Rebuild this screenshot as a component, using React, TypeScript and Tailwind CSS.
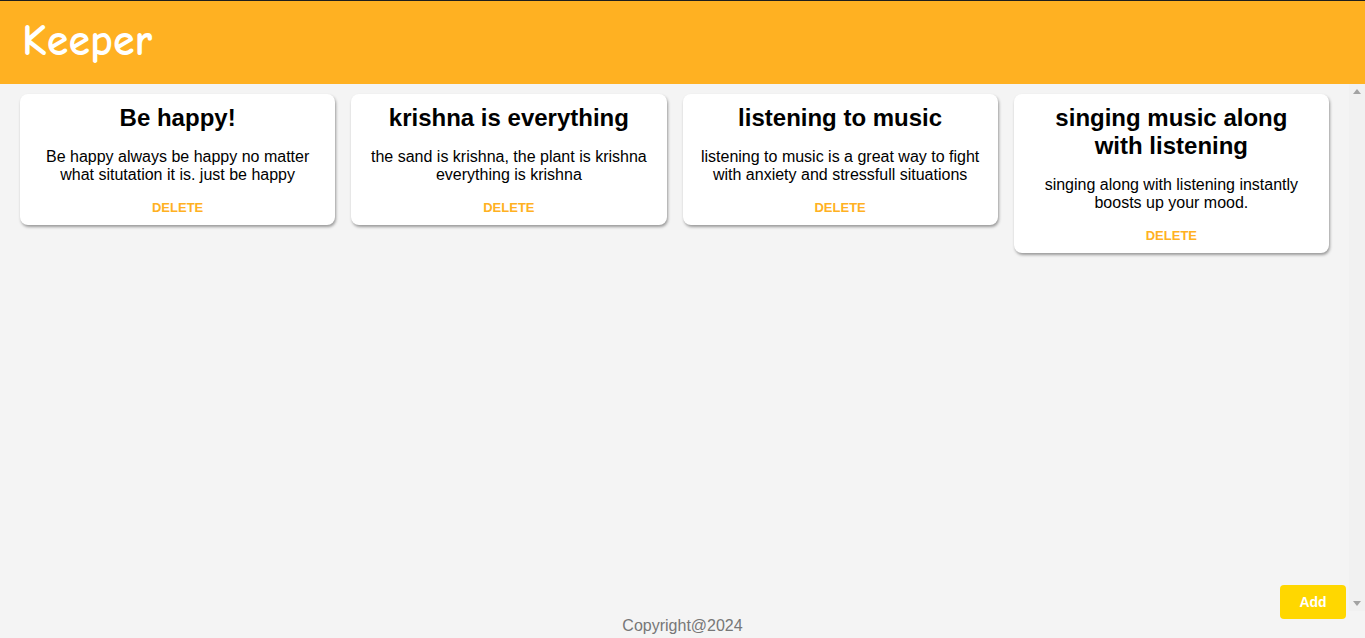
import React from 'react';

const notes = [
    {
        title: 'Be happy!',
        content: 'Be happy always be happy no matter what situtation it is. just be happy'
    },
    {
        title: 'krishna is everything',
        content: 'the sand is krishna, the plant is krishna everything is krishna'
    },
    {
        title: 'listening to music',
        content: 'listening to music is a great way to fight with anxiety and stressfull situations'
    },
    {
        title: 'singing music along with listening',
        content: 'singing along with listening instantly boosts up your mood.'
    }
];

const Note = ({ title, content }: { title: string; content: string }) => {
    return (
        <div className="bg-white rounded-[8px] shadow-[1px_2px_3px_#9a9a9a] px-4 pt-[10px] pb-[9px] text-center">
            <h1 className="text-[24px] leading-[28px] font-bold text-black m-0">{title}</h1>
            <p className="text-[16px] leading-[18px] text-black mt-4">{content}</p>
            <button className="block mx-auto mt-[16px] text-[13px] leading-[16px] font-bold text-[#ffb122] uppercase bg-transparent border-none">
                Delete
            </button>
        </div>
    );
};

export default function App() {
    return (
        <div className="h-screen flex flex-col bg-[#f4f4f4] font-['Liberation_Sans',Arial,sans-serif]">
            <header className="h-[84px] shrink-0 bg-[#ffb122] border-t border-[#1e1e1e] px-[22px] flex items-center">
                <h1 className="text-white text-[44px] leading-none font-bold font-['Comic_Sans_MS','Comic_Neue',cursive] pb-[4px]">
                    Keeper
                </h1>
            </header>
            <main className="flex-1 flex min-h-0">
                <div className="flex-1 overflow-y-auto">
                    <div className="grid grid-cols-4 gap-4 px-5 pt-[10px] items-start">
                        {notes.map((note, i) => (
                            <Note key={i} title={note.title} content={note.content} />
                        ))}
                    </div>
                </div>
                {/* scrollbar track */}
                <div className="w-4 shrink-0 bg-[#f1f1f1] flex flex-col justify-between items-center py-[5px]">
                    <svg width="8" height="5" viewBox="0 0 8 5">
                        <path d="M4 0 L8 5 L0 5 Z" fill="#a3a3a3" />
                    </svg>
                    <svg width="8" height="5" viewBox="0 0 8 5">
                        <path d="M0 0 L8 0 L4 5 Z" fill="#a3a3a3" />
                    </svg>
                </div>
            </main>
            <footer className="h-[27px] shrink-0 text-center text-[16px] leading-[30px] text-[#777]">
                Copyright@2024
            </footer>
            <button className="fixed right-[19px] bottom-[19px] w-[66px] h-[34px] rounded-[4px] bg-[#ffd700] text-white font-bold text-[14px]">
                Add
            </button>
        </div>
    );
}
